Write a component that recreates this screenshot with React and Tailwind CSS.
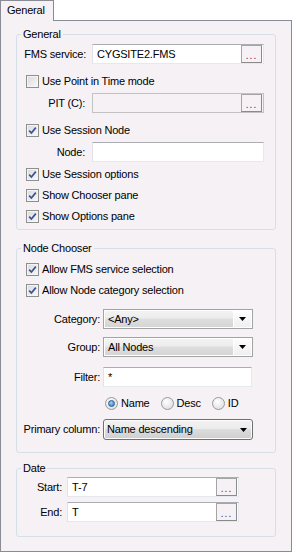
const PANEL = "bg-[#f5f1f5]";

const Check = () => (
  <svg width="9" height="9" viewBox="0 0 9 9">
    <path d="M1.2 4.6 L3.4 7 L7.8 1.6" fill="none" stroke="#3d5195" strokeWidth="1.7" />
  </svg>
);

const Arrow = () => (
  <svg width="7" height="4" viewBox="0 0 7 4">
    <path d="M0 0 H7 L3.5 4 Z" fill="#000" />
  </svg>
);

const CheckBox = ({ label, checked }) => (
  <div className="flex h-[21px] items-center pl-[9px]">
    <span className="flex h-[13px] w-[13px] items-center justify-center border border-[#8e8f8f] bg-[linear-gradient(135deg,#d9d9d9,#f9f9f9)] shadow-[inset_0_0_0_1px_#f4f4f4]">
      {checked && <Check />}
    </span>
    <span className="ml-[3px]">{label}</span>
  </div>
);

const BrowseButton = () => (
  <div className="mr-[1px] flex h-full w-[21px] items-center justify-center border border-[#a5a5a5] border-b-[#8a8a8a] border-r-[#8a8a8a] bg-[#f5f1f5] pt-[3px] text-[10px] leading-none tracking-[1px] text-[#5b1f6e]">
    ...
  </div>
);

const TextBox = ({ value, width, browse, disabled }) => (
  <div
    className={
      disabled
        ? `flex h-[20px] items-center border border-[#c2c2c2] ${PANEL} ${width}`
        : `flex h-[20px] items-center border border-[#e3e9ef] border-l-[#e2e3ea] border-t-[#abadb3] bg-white ${width}`
    }
  >
    <span className="flex-1 pl-[4px]">{value}</span>
    {browse && <BrowseButton />}
  </div>
);

const Combo = ({ value }) => (
  <div className="flex h-[20px] w-[150px] border border-[#a3a3a3]">
    <div className="flex flex-1 items-center border border-white bg-[linear-gradient(#f3f3f3_0%,#ececec_45%,#dedede_50%,#d5d5d5_100%)] pl-[3px]">
      {value}
    </div>
    <div className="flex w-[18px] items-center justify-center border-y border-r border-white bg-[linear-gradient(#fdfdfd,#efefef)]">
      <Arrow />
    </div>
  </div>
);

const Radio = ({ label, checked }) => (
  <div className="flex items-center">
    <span className="flex h-[13px] w-[13px] items-center justify-center rounded-full border border-[#9a9a9a] bg-[radial-gradient(circle_at_40%_35%,#ffffff,#d8d8d8)]">
      {checked && (
        <span className="h-[7px] w-[7px] rounded-full border border-[#2a5d95] bg-[radial-gradient(circle_at_40%_35%,#9fd2f8,#2f6fb8)]" />
      )}
    </span>
    <span className="ml-[3px]">{label}</span>
  </div>
);

const GroupBox = ({ title, className, children }) => (
  <fieldset className={`mx-[15px] rounded-[3px] border border-[#d5dfe5] ${className}`}>
    <legend className="ml-[4px] px-[2px] leading-[13px]">{title}</legend>
    {children}
  </fieldset>
);

const Row = ({ label, labelWidth, gap, className = "", children }) => (
  <div className={`flex items-center ${className}`}>
    <span className={`text-right ${labelWidth}`}>{label}</span>
    <div className={gap}>{children}</div>
  </div>
);

export default function App() {
  return (
    <div className="h-[553px] w-[293px] bg-white font-['Liberation_Sans',sans-serif] text-[11px] leading-[13px] tracking-[-0.2px] text-black">
      {/* tab strip */}
      <div className="flex h-[20px] items-start">
        <div className={`relative z-10 flex h-[21px] w-[54px] items-center border-x border-t border-[#898c95] pl-[6px] pb-[1px] ${PANEL}`}>
          General
        </div>
      </div>

      {/* tab page */}
      <div className={`h-[532px] w-[292px] border border-[#898c95] pt-[7px] ${PANEL}`}>
        <GroupBox title="General" className="pb-[2px]">
          <Row label="FMS service:" labelWidth="w-[69px]" gap="ml-[6px]" className="mt-[3px]">
            <TextBox value="CYGSITE2.FMS" width="w-[172px]" browse />
          </Row>
          <div className="mt-[7px]">
            <CheckBox label="Use Point in Time mode" />
          </div>
          <Row label="PIT (C):" labelWidth="w-[68px]" gap="ml-[7px]" className="mt-[1px]">
            <TextBox value="" width="w-[172px]" browse disabled />
          </Row>
          <div className="mt-[7px]">
            <CheckBox label="Use Session Node" checked />
          </div>
          <Row label="Node:" labelWidth="w-[68px]" gap="ml-[7px]" className="mt-[1px]">
            <TextBox value="" width="w-[172px]" />
          </Row>
          <div className="mt-[2px]">
            <CheckBox label="Use Session options" checked />
            <CheckBox label="Show Chooser pane" checked />
            <CheckBox label="Show Options pane" checked />
          </div>
        </GroupBox>

        <GroupBox title="Node Chooser" className="mt-[12px] pb-[12px]">
          <div className="mt-[4px]">
            <CheckBox label="Allow FMS service selection" checked />
            <CheckBox label="Allow Node category selection" checked />
          </div>
          <Row label="Category:" labelWidth="w-[83px]" gap="ml-[3px]" className="mt-[8px]">
            <Combo value="<Any>" />
          </Row>
          <Row label="Group:" labelWidth="w-[83px]" gap="ml-[3px]" className="mt-[8px]">
            <Combo value="All Nodes" />
          </Row>
          <Row label="Filter:" labelWidth="w-[83px]" gap="ml-[3px]" className="mt-[10px]">
            <TextBox value="*" width="w-[149px]" />
          </Row>
          <div className="mt-[6px] flex h-[20px] items-center pl-[88px]">
            <Radio label="Name" checked />
            <div className="ml-[11px]">
              <Radio label="Desc" />
            </div>
            <div className="ml-[11px]">
              <Radio label="ID" />
            </div>
          </div>
          <Row label="Primary column:" labelWidth="w-[83px]" gap="ml-[3px]" className="mt-[6px]">
            <div className="flex h-[21px] w-[150px] items-center justify-between rounded-[3px] border border-[#707070] bg-[linear-gradient(#f2f2f2_0%,#ebebeb_50%,#dddddd_50%,#cfcfcf_100%)] pl-[3px] pr-[5px] shadow-[inset_0_0_0_1px_#fcfcfc]">
              <span>Name descending</span>
              <Arrow />
            </div>
          </Row>
        </GroupBox>

        <GroupBox title="Date" className="mt-[9px] pb-[14px]">
          <Row label="Start:" labelWidth="w-[45px]" gap="ml-[5px]" className="mt-[2px]">
            <TextBox value="T-7" width="w-[172px]" browse />
          </Row>
          <Row label="End:" labelWidth="w-[45px]" gap="ml-[5px]" className="mt-[5px]">
            <TextBox value="T" width="w-[172px]" browse />
          </Row>
        </GroupBox>
      </div>
    </div>
  );
}
